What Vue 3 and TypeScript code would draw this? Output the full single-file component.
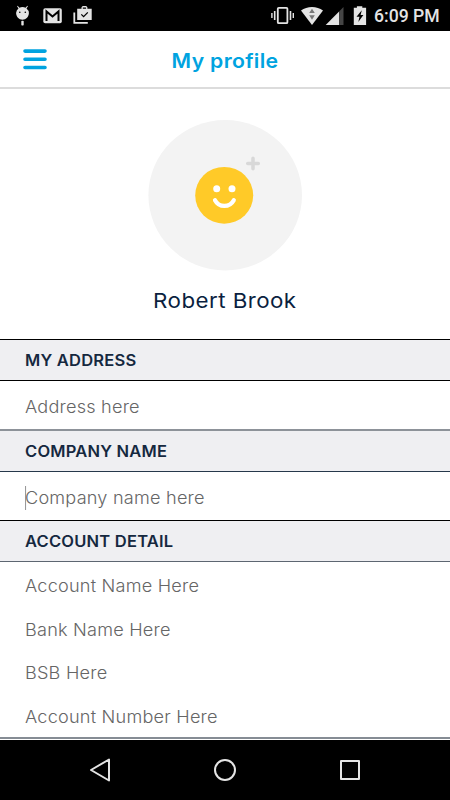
<script setup lang="ts">
interface Field { text: string; focused?: boolean }
interface Section { id: string; title: string; fields: Field[] }

const sections: Section[] = [
  { id: 'address', title: 'MY ADDRESS', fields: [{ text: 'Address here' }] },
  { id: 'company', title: 'COMPANY NAME', fields: [{ text: 'Company name here', focused: true }] },
  {
    id: 'account',
    title: 'ACCOUNT DETAIL',
    fields: [
      { text: 'Account Name Here' },
      { text: 'Bank Name Here' },
      { text: 'BSB Here' },
      { text: 'Account Number Here' },
    ],
  },
]
</script>

<template>
  <div class="screen">
    <div class="status">
      <svg class="status-icons" width="100" height="31" viewBox="0 0 100 31">
        <g fill="#e4e4e4">
          <path d="M16.2 12.5a6.4 6 0 0 1 2.3-4.1L17.1 6.2l.6-.4 1.7 2a7 7 0 0 1 6.2 0l1.7-2 .6.4-1.4 2.2a6 6 0 0 1 2.4 4.7c0 3.7-2.8 6.7-6.4 6.7s-6.4-3-6.4-6.7z" />
          <rect x="21.3" y="20.7" width="2.4" height="4.8" rx=".7" />
          <rect x="43.3" y="8.2" width="18.5" height="15" rx="1.8" />
        </g>
        <circle cx="19.8" cy="12.3" r=".8" /><circle cx="25.3" cy="12.3" r=".8" />
        <path d="M46.5 21V11.4l6 5 6-5V21" fill="none" stroke="#000" stroke-width="2" />
        <path d="M74.3 12.5v10.3h13.5" fill="none" stroke="#e4e4e4" stroke-width="1.8" />
        <path d="M77.2 8.7h4.3V7.3l1.2-1.2h3.5l1.2 1.2v1.4h4.3v11.4H77.2z M82.8 8.7h3.3V7.4h-3.3z" fill="#e4e4e4" fill-rule="evenodd" />
        <path d="m81.3 14.4 2.3 2.2 4.2-4.2" fill="none" stroke="#000" stroke-width="1.3" />
      </svg>
      <div class="status-right">
        <svg width="106" height="31" viewBox="270 0 106 31">
          <g fill="none" stroke="#e4e4e4">
            <rect x="277.8" y="7.8" width="9.6" height="15.4" rx="1" stroke-width="1.8" />
            <path d="M274.7 11v9M290.5 11v9" stroke-width="1.6" />
            <path d="M271.9 13v5M293.3 13v5" stroke-width="1.4" />
          </g>
          <path d="M301 10.5c6-4.7 16-4.7 22 0L312 25z" fill="#e4e4e4" />
          <path d="m312 8.8 2.8 4.3h-5.6zM309.2 15.2h5.6L312 19.7z" fill="#777" />
          <path d="M339.1 11.5V25h-13.4z" fill="#e4e4e4" />
          <path d="M339.1 11.5 343.5 7v18h-4.4z" fill="#454545" />
          <path d="M354.3 7.8h2.6V6.2h5.4v1.6h3.8V25h-12.3V7.8z" fill="#e4e4e4" />
          <path d="m361.8 10.3-5.3 6.4h3l-1.2 5.4 5.1-7h-2.8z" fill="#000" />
        </svg>
        <span class="clock">6:09 PM</span>
      </div>
    </div>

    <header class="header">
      <svg class="menu" width="26" height="24" viewBox="0 0 26 24">
        <path d="M3 4.1h20M3 12.3h20M3 20.5h20" stroke="#00a3e0" stroke-width="3.6" stroke-linecap="round" />
      </svg>
      <h1>My profile</h1>
    </header>

    <main>
      <div class="profile">
        <svg class="avatar" width="154" height="151" viewBox="0 0 154 151">
          <ellipse cx="77.2" cy="75.2" rx="76.8" ry="75.2" fill="#f3f3f3" />
          <path d="M105 38.2v10.6M99.7 43.5h10.6" stroke="#d8d8d8" stroke-width="3.5" stroke-linecap="round" />
          <ellipse cx="76.2" cy="75.3" rx="29" ry="28.4" fill="#ffca28" />
          <circle cx="68.7" cy="68.8" r="3.5" fill="#fff" /><circle cx="84" cy="68.8" r="3.5" fill="#fff" />
          <path d="M67 80.2c4 7.6 14.7 7.6 18.8 0" fill="none" stroke="#fff" stroke-width="4.2" stroke-linecap="round" />
        </svg>
        <div class="name">Robert Brook</div>
      </div>

      <section v-for="s in sections" :key="s.id" :class="s.id">
        <h2><span>{{ s.title }}</span></h2>
        <div class="fields">
          <div v-for="f in s.fields" :key="f.text" class="field" :class="{ focused: f.focused }">
            <span>{{ f.text }}</span>
          </div>
        </div>
      </section>
    </main>

    <nav class="nav">
      <svg width="450" height="60" viewBox="0 0 450 60" fill="none" stroke="#e4e4e4" stroke-width="2" stroke-linejoin="round">
        <path d="M91 30 109 19.5v21z" />
        <circle cx="225" cy="30" r="10" />
        <rect x="341" y="21" width="18" height="18" />
      </svg>
    </nav>
  </div>
</template>

<style>
body { margin: 0; background: #fff; }
</style>

<style scoped>
.screen { width: 450px; height: 800px; display: flex; flex-direction: column; overflow: hidden; background: #fff; font-family: Inter, "Open Sans", sans-serif; }
.status { flex: 0 0 31px; height: 31px; display: flex; justify-content: space-between; background: #000; }
.status-right { display: flex; width: 180px; }
.status svg { display: block; flex: none; }
.clock { margin-left: -2px; padding-top: 2px; height: 29px; line-height: 29px; font-family: Roboto, sans-serif; font-weight: 500; font-size: 17.6px; color: #e4e4e4; white-space: nowrap; }
.header { box-sizing: border-box; flex: 0 0 58px; display: grid; grid-template-columns: 50px 1fr 50px; align-items: center; border-bottom: 2px solid #dcdcdc; }
.menu { margin-left: 22px; }
h1 { margin: 3px 0 0; text-align: center; font-size: 20px; line-height: 28px; font-weight: 600; color: #00a3e0; letter-spacing: 0.3px; transform: scaleX(1.06); }
main { flex: 0 0 651px; display: flex; flex-direction: column; }
.profile { flex: 0 0 250px; display: flex; flex-direction: column; align-items: center; }
.avatar { display: block; margin-top: 31px; flex: none; }
.name { margin-top: 15px; line-height: 30px; font-size: 20.5px; color: #0b1f3f; letter-spacing: 0.4px; white-space: nowrap; transform: scaleX(1.09); }
h2 { box-sizing: border-box; margin: 0; height: 42px; padding-left: 25px; border: solid #000; border-width: 1px 0; background: #efeff2; font-size: 15.5px; line-height: 41px; font-weight: 600; color: #15283f; letter-spacing: 0.2px; }
h2 span { display: inline-block; transform: scaleX(1.065); transform-origin: left; }
.field { box-sizing: border-box; display: flex; align-items: center; padding-left: 25px; font-size: 17px; font-weight: 300; color: #666; white-space: nowrap; }
.field span { line-height: 24px; letter-spacing: 0.2px; transform: scaleX(1.065); transform-origin: left; }
.address .field { height: 48px; padding-top: 3px; }
.company h2 { border-top: 2px solid #8d9299; border-bottom-color: #26384b; height: 43px; }
.company .field { height: 48px; padding-top: 3px; }
.focused span { box-shadow: inset 1px 0 #999; }
.account h2 { border-bottom-color: #5d6671; line-height: 42px; }
.account .fields { padding-top: 2px; height: 173px; border-bottom: 2px solid #858c94; }
.account .field { height: 43.8px; }
.nav { flex: 0 0 60px; background: #000; }
.nav svg { display: block; }
</style>
